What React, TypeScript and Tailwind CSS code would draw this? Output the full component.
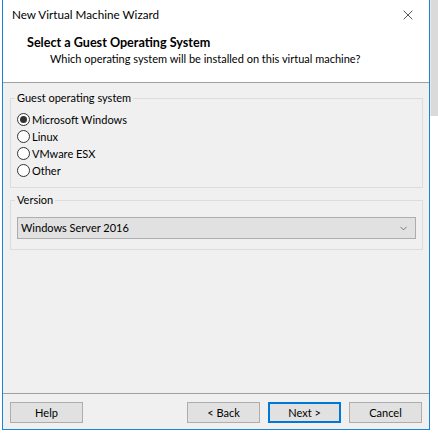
import { ChevronDown, X } from 'lucide-react'

const options = ['Microsoft Windows', 'Linux', 'VMware ESX', 'Other']

function Radio({ label, checked }: { label: string; checked?: boolean }) {
    return (
        <div className="flex items-center h-[17px] text-[11px] text-black">
            <span className="w-[13px] h-[13px] rounded-full border border-[#333333] bg-white flex items-center justify-center shrink-0">
                {checked && <span className="w-[7px] h-[7px] rounded-full bg-[#333333]"></span>}
            </span>
            <span className="ml-[2px] leading-none">{label}</span>
        </div>
    )
}

function WizardButton({ label, primary }: { label: string; primary?: boolean }) {
    return (
        <button
            className={
                primary
                    ? 'w-[73px] h-[21px] bg-[#e1e1e1] border-2 border-[#0078d7] text-[11px] text-black leading-none'
                    : 'w-[73px] h-[21px] bg-[#e1e1e1] border border-[#adadad] text-[11px] text-black leading-none'
            }
        >
            {label}
        </button>
    )
}

export default function App() {
    return (
        <div className="w-[438px] h-[433px] bg-white flex items-start" style={{ fontFamily: 'Lato, "Noto Sans", sans-serif' }}>
            {/* Window */}
            <div className="ml-[2px] w-[428px] h-[430px] border-x border-b border-[#1883d7] flex flex-col">
                {/* Title + header */}
                <div className="h-[82px] bg-white flex flex-col shrink-0">
                    <div className="h-[30px] flex items-center justify-between pl-[9px] pr-[13px]">
                        <span className="text-[11.7px] text-black">New Virtual Machine Wizard</span>
                        <X size={16} strokeWidth={1} className="text-black" />
                    </div>
                    <div className="pl-[24px] mt-[5px] text-[12.6px] font-bold text-black leading-[16px]">
                        Select a Guest Operating System
                    </div>
                    <div className="pl-[47px] text-[11px] text-black leading-[16px]">
                        Which operating system will be installed on this virtual machine?
                    </div>
                </div>
                <div className="h-px bg-[#a0a0a0] shrink-0"></div>

                {/* Body */}
                <div className="flex-1 bg-[#f0f0f0] pl-[7px] pr-[6px]">
                    <fieldset className="mt-[7px] border border-[#dcdcdc] pl-0 pt-[5px] pb-[8px]">
                        <legend className="ml-[4px] px-[2px] text-[11px] leading-[16px] text-black">Guest operating system</legend>
                        <div className="pl-[6px]">
                            {options.map((o, i) => (
                                <Radio key={o} label={o} checked={i === 0} />
                            ))}
                        </div>
                    </fieldset>
                    <fieldset className="mt-[4px] border border-[#dcdcdc] pl-0 pt-[9px] pb-[10px]">
                        <legend className="ml-[4px] px-[2px] text-[11px] leading-[16px] text-black">Version</legend>
                        <div className="mx-[6px] h-[22px] bg-[#e1e1e1] border border-[#adadad] flex items-center justify-between pl-[3px] pr-[6px] text-[11px] text-black">
                            <span>Windows Server 2016</span>
                            <ChevronDown size={11} strokeWidth={1.3} className="text-[#333333]" />
                        </div>
                    </fieldset>
                </div>

                {/* Footer */}
                <div className="h-px bg-[#a0a0a0] shrink-0"></div>
                <div className="h-[35px] bg-[#f0f0f0] flex items-start pt-[8px] pl-[7px] pr-[7px] shrink-0">
                    <WizardButton label="Help" />
                    <div className="flex-1"></div>
                    <div className="flex gap-[8px]">
                        <WizardButton label="< Back" />
                        <WizardButton label="Next >" primary />
                        <WizardButton label="Cancel" />
                    </div>
                </div>
            </div>
            {/* Scrollbar strip behind */}
            <div className="w-[8px] h-[116px] bg-[#dadada] border-l border-[#e8e8e8]"></div>
        </div>
    )
}
